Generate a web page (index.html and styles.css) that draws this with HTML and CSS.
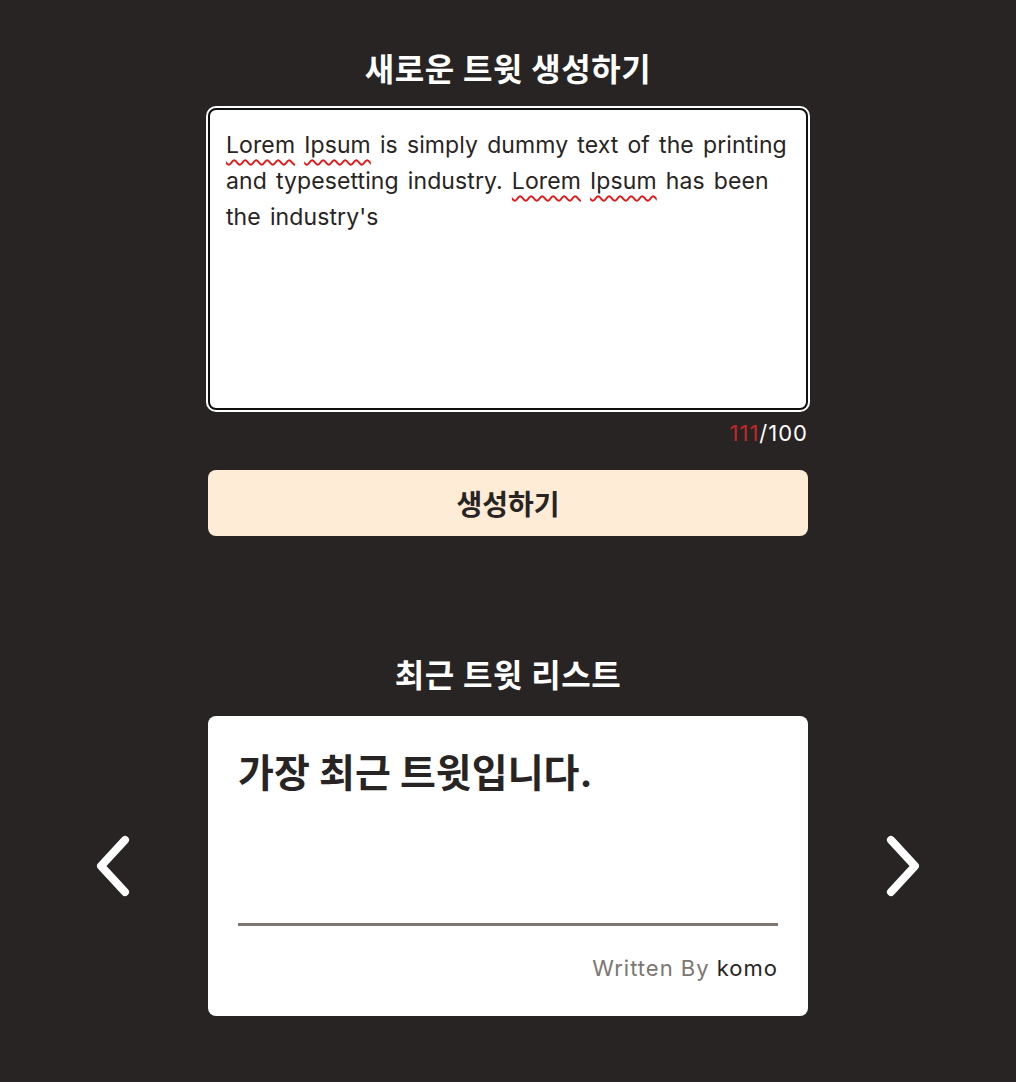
FILE: index.html
```html
<!DOCTYPE html>
<html lang="ko">
<head>
  <meta charset="UTF-8">
  <meta name="viewport" content="width=device-width, initial-scale=1.0">
  <title>트윗</title>
  <link rel="stylesheet" href="styles.css">
</head>
<body>

  <section class="create">
    <h1 class="title">새로운 트윗 생성하기</h1>
    <div class="tweet-input" role="textbox" aria-multiline="true"><span class="typo">Lorem</span> <span class="typo">Ipsum</span> is simply dummy text of the printing and typesetting industry. <span class="typo">Lorem</span> <span class="typo">Ipsum</span> has been the industry's</div>
    <p class="counter"><span class="over">111</span>/100</p>
    <button type="button" class="submit">생성하기</button>
  </section>

  <section class="recent">
    <h2 class="title">최근 트윗 리스트</h2>
    <div class="slider">
      <button type="button" class="arrow" aria-label="이전">
        <svg width="40" height="64" viewBox="0 0 40 64"><path d="M32 6 L8 32 L32 58" fill="none" stroke="#fff" stroke-width="8" stroke-linecap="round" stroke-linejoin="round"/></svg>
      </button>
      <article class="card">
        <h3 class="card-title">가장 최근 트윗입니다.</h3>
        <div class="card-foot">
          <span class="by">Written By</span> komo
        </div>
      </article>
      <button type="button" class="arrow" aria-label="다음">
        <svg width="40" height="64" viewBox="0 0 40 64"><path d="M8 6 L32 32 L8 58" fill="none" stroke="#fff" stroke-width="8" stroke-linecap="round" stroke-linejoin="round"/></svg>
      </button>
    </div>
  </section>

</body>
</html>
```

FILE: styles.css
```css
* {
  margin: 0;
  padding: 0;
  box-sizing: border-box;
}

body {
  background-color: #282423;
  font-family: Inter, "Noto Sans CJK KR", sans-serif;
  color: #282423;
  padding-top: 47px;
}

section {
  display: flex;
  flex-direction: column;
  align-items: center;
}

.title {
  color: #fff;
  font-size: 32px;
  font-weight: 700;
  line-height: 46px;
  letter-spacing: 0.6px;
  text-align: center;
}

.tweet-input {
  width: 600px;
  height: 302px;
  margin-top: 15px;
  padding: 17px 16px;
  background-color: #fff;
  border: 2px solid #101010;
  border-radius: 8px;
  box-shadow: 0 0 0 2px #fff;
  font-size: 23px;
  line-height: 36px;
  letter-spacing: 0.1px;
  word-spacing: 2.5px;
  color: #282423;
}

.typo {
  text-decoration: underline wavy #e01818;
  text-decoration-thickness: 1.5px;
  text-underline-offset: 6px;
}

.counter {
  width: 600px;
  margin-top: 5px;
  text-align: right;
  color: #fff;
  font-size: 22px;
  line-height: 36px;
  letter-spacing: 1px;
}

.over {
  color: #c3262a;
}

.submit {
  width: 600px;
  height: 66px;
  margin-top: 19px;
  border: none;
  border-radius: 8px;
  background-color: #ffecd6;
  color: #282423;
  font-family: inherit;
  font-size: 28px;
  font-weight: 700;
  cursor: pointer;
}

.recent {
  margin-top: 117px;
}

.slider {
  display: flex;
  align-items: center;
  gap: 75px;
  margin-top: 17px;
}

.arrow {
  width: 40px;
  height: 64px;
  background: none;
  border: none;
  cursor: pointer;
  display: flex;
}

.card {
  width: 600px;
  height: 300px;
  padding: 30px;
  background-color: #fff;
  border-radius: 8px;
  display: flex;
  flex-direction: column;
}

.card-title {
  font-size: 39px;
  font-weight: 700;
  line-height: 54px;
  flex: 1;
}

.card-foot {
  border-top: 3px solid #7d7671;
  padding-top: 24px;
  text-align: right;
  font-size: 22px;
  line-height: 36px;
  letter-spacing: 1px;
}

.by {
  color: #7d7671;
}
```
